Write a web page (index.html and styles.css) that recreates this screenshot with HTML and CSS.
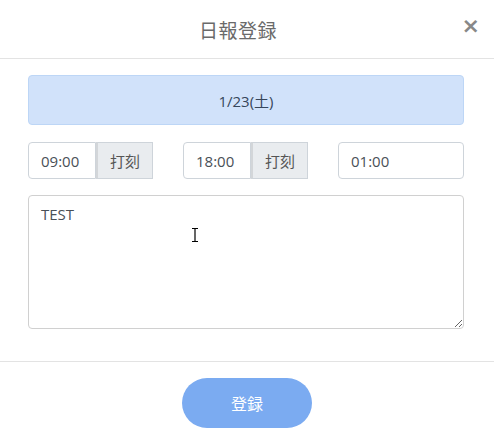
FILE: index.html
```html
<!DOCTYPE html>
<html lang="ja">
<head>
  <meta charset="UTF-8">
  <meta name="viewport" content="width=device-width, initial-scale=1.0">
  <title>日報登録</title>
  <link rel="stylesheet" href="styles.css">
</head>
<body>
  <div class="modal">
    <header class="modal-header">
      <h1 class="modal-title">日報登録</h1>
      <button class="close" aria-label="閉じる">&times;</button>
    </header>

    <div class="modal-body">
      <div class="date-bar">1/23(土)</div>

      <div class="time-row">
        <div class="input-group">
          <input class="field" type="text" value="09:00">
          <span class="addon">打刻</span>
        </div>
        <div class="input-group">
          <input class="field" type="text" value="18:00">
          <span class="addon">打刻</span>
        </div>
        <div class="input-group">
          <input class="field" type="text" value="01:00">
        </div>
      </div>

      <div class="memo-wrap">
        <textarea class="memo">TEST</textarea>
        <!-- mouse cursor in the screenshot -->
        <svg class="ibeam" width="8" height="16" viewBox="0 0 8 16">
          <path d="M1 1.5h6M4 1.5v13M1 14.5h6" stroke="#000" stroke-width="1.2" fill="none"/>
        </svg>
      </div>
    </div>

    <footer class="modal-footer">
      <button class="submit">登録</button>
    </footer>
  </div>
</body>
</html>
```

FILE: styles.css
```css
* {
  box-sizing: border-box;
}

body {
  margin: 0;
  background: #fff;
  font-family: "Open Sans", "Noto Sans CJK JP", sans-serif;
  color: #495057;
}

.modal {
  width: 494px;
}

/* Header */
.modal-header {
  position: relative;
  height: 59px;
  border-bottom: 1px solid #e3e3e3;
  display: flex;
  align-items: center;
  justify-content: center;
  padding-right: 18px;
}

.modal-title {
  margin: 0;
  font-family: "Noto Sans CJK JP", sans-serif;
  font-size: 19px;
  font-weight: 400;
  color: #6a6a6a;
  letter-spacing: 0.5px;
  padding-top: 1px;
}

.close {
  position: absolute;
  right: 14px;
  top: 15px;
  border: none;
  background: none;
  font-family: "DejaVu Sans", sans-serif;
  font-size: 22px;
  font-weight: bold;
  color: #888;
  padding: 0;
  line-height: 1;
  cursor: pointer;
}

/* Body */
.modal-body {
  padding: 16px 30px 32px 28px;
}

.date-bar {
  height: 50px;
  background: #d1e2fa;
  border: 1px solid #bdd6f6;
  border-radius: 4px;
  display: flex;
  align-items: center;
  justify-content: center;
  font-size: 15px;
  color: #36465a;
}

.time-row {
  margin-top: 17px;
  display: grid;
  grid-template-columns: 125px 125px 126px;
  column-gap: 30px;
}

.input-group {
  display: flex;
  height: 37px;
}

.field {
  flex: 1;
  min-width: 0;
  height: 37px;
  border: 1px solid #ced4da;
  border-radius: 4px;
  padding: 0 12px;
  font-family: "Open Sans", sans-serif;
  font-size: 15px;
  color: #495057;
}

.input-group .field:not(:last-child) {
  flex: none;
  width: 68px;
  border-radius: 4px 0 0 4px;
}

.addon {
  flex: 1;
  display: flex;
  align-items: center;
  justify-content: center;
  background: #e9ecef;
  border: 1px solid #ced4da;
  border-left: 2px solid #d3d6d9;
  font-family: "Noto Sans CJK JP", sans-serif;
  font-size: 15px;
  color: #555;
}

.memo-wrap {
  position: relative;
  margin-top: 16px;
}

.memo {
  display: block;
  width: 100%;
  height: 134px;
  border: 1px solid #d0d0d0;
  border-radius: 4px;
  padding: 8px 12px;
  font-family: "Open Sans", sans-serif;
  font-size: 15px;
  color: #495057;
  resize: vertical;
}

.ibeam {
  position: absolute;
  left: 163px;
  top: 32px;
}

/* Footer */
.modal-footer {
  border-top: 1px solid #e3e3e3;
  padding-top: 16px;
  display: flex;
  justify-content: center;
}

.submit {
  width: 130px;
  height: 50px;
  border: none;
  border-radius: 25px;
  background: #7babf1;
  color: #fff;
  font-family: "Noto Sans CJK JP", sans-serif;
  font-size: 16px;
  cursor: pointer;
}
```
